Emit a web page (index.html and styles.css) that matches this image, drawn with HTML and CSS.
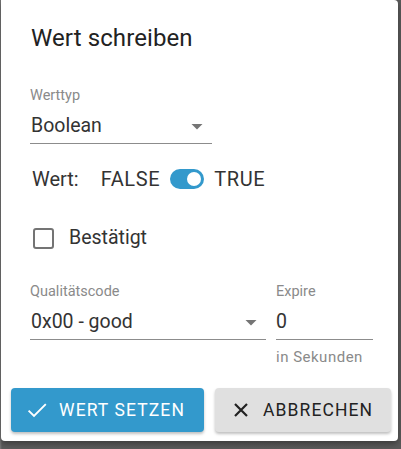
FILE: index.html
```html
<!DOCTYPE html>
<html lang="de">
<head>
<meta charset="utf-8">
<title>Wert schreiben</title>
<link rel="stylesheet" href="styles.css">
</head>
<body>
<div class="dialog">
  <h2 class="title">Wert schreiben</h2>
  <div class="content">
    <div class="field field-type">
      <div class="label">Werttyp</div>
      <div class="select">
        <span class="value">Boolean</span>
        <svg class="arrow" width="24" height="24" viewBox="0 0 24 24"><path d="M6.5 10l5.5 5.5 5.5-5.5z" fill="#757575"/></svg>
      </div>
    </div>
    <div class="switch-row">
      <span class="wert">Wert:</span>
      <span class="opt">FALSE</span>
      <span class="switch"><span class="thumb"></span></span>
      <span class="opt">TRUE</span>
    </div>
    <div class="check-row">
      <span class="checkbox"></span>
      <span>Bestätigt</span>
    </div>
    <div class="pair">
      <div class="field field-quality">
        <div class="label">Qualitätscode</div>
        <div class="select">
          <span class="value">0x00 - good</span>
          <svg class="arrow" width="24" height="24" viewBox="0 0 24 24"><path d="M6.5 10l5.5 5.5 5.5-5.5z" fill="#757575"/></svg>
        </div>
      </div>
      <div class="field field-expire">
        <div class="label">Expire</div>
        <div class="select">
          <span class="value">0</span>
        </div>
        <div class="helper">in Sekunden</div>
      </div>
    </div>
  </div>
  <div class="actions">
    <button class="btn btn-primary">
      <svg width="24" height="24" viewBox="0 0 24 24"><path d="M3.6 12.6l5.4 5.4 11.8-11.8" fill="none" stroke="#fff" stroke-width="1.9"/></svg>
      <span>WERT SETZEN</span>
    </button>
    <button class="btn btn-secondary">
      <svg width="24" height="24" viewBox="0 0 24 24"><path d="M6 6l12 12M18 6L6 18" fill="none" stroke="#222" stroke-width="2.2"/></svg>
      <span>ABBRECHEN</span>
    </button>
  </div>
</div>
</body>
</html>
```

FILE: styles.css
```css
html, body {
  margin: 0;
  padding: 0;
}
body {
  background: linear-gradient(90deg, #7a7a7a 0, #5c5c5c 2px, #5a5a5a);
  width: 401px;
  height: 449px;
  overflow: hidden;
  font-family: Roboto, "Noto Sans", sans-serif;
  color: #333;
}
.dialog {
  margin-left: 1px;
  width: 397px;
  height: 441px;
  background: #fff;
  border-radius: 0 4px 4px 4px;
  box-shadow: 0 3px 6px rgba(0,0,0,0.35);
  display: flex;
  flex-direction: column;
  box-sizing: border-box;
}
.title {
  margin: 24px 0 0 30px;
  font-size: 24px;
  line-height: 28px;
  font-weight: 400;
  color: #222;
  letter-spacing: 0.1px;
}
.content {
  padding: 0 0 0 29px;
  display: flex;
  flex-direction: column;
}
.label {
  font-size: 14.5px;
  line-height: 16px;
  color: #8a8a8a;
}
.field-type {
  width: 182px;
  margin-top: 36px;
}
.select {
  display: flex;
  align-items: center;
  justify-content: space-between;
  border-bottom: 1px solid #8c8c8c;
  margin-top: 10px;
  height: 28px;
  padding-bottom: 1px;
  box-sizing: content-box;
}
.value {
  font-size: 19.5px;
  line-height: 24px;
  padding-left: 1px;
  align-self: flex-start;
}
.arrow {
  margin-right: 3px;
  align-self: flex-start;
}
.switch-row {
  margin-top: 23px;
  display: flex;
  align-items: center;
  font-size: 20px;
  line-height: 24px;
  padding-left: 2px;
}
.wert {
  margin-right: 22px;
}
.opt {
  letter-spacing: 0.6px;
}
.switch {
  width: 34px;
  height: 20px;
  border-radius: 10px;
  background: #3399cc;
  margin: 0 10px 0 10px;
  display: flex;
  align-items: center;
  justify-content: flex-end;
  padding-right: 3px;
  box-sizing: border-box;
}
.thumb {
  width: 14px;
  height: 14px;
  border-radius: 50%;
  background: #fff;
}
.check-row {
  margin-top: 35px;
  display: flex;
  align-items: center;
  font-size: 19.5px;
  line-height: 24px;
  padding-left: 3px;
}
.checkbox {
  width: 17px;
  height: 17px;
  border: 2.5px solid #747474;
  border-radius: 3px;
  margin-right: 15px;
}
.pair {
  display: flex;
  gap: 10px;
  margin-top: 34px;
}
.field-quality {
  width: 236px;
}
.field-expire {
  width: 97px;
}
.field-expire .value {
  padding-left: 0;
}
.helper {
  margin-top: 9px;
  font-size: 15px;
  line-height: 16px;
  letter-spacing: 0.5px;
  color: #8a8a8a;
}
.actions {
  margin-top: auto;
  padding: 0 0 9px 10px;
  display: flex;
  gap: 11px;
}
.btn {
  height: 44px;
  border: none;
  border-radius: 4px;
  display: flex;
  align-items: center;
  font-family: Roboto, "Noto Sans", sans-serif;
  font-size: 17.5px;
  letter-spacing: 1.1px;
  padding: 0;
  box-shadow: 0 2px 3px rgba(0,0,0,0.25);
}
.btn-primary {
  width: 193px;
  background: #3399cc;
  color: #fff;
  padding-left: 14px;
}
.btn-primary span {
  margin-left: 10px;
}
.btn-secondary {
  width: 176px;
  background: #e0e0e0;
  color: #222;
  padding-left: 14px;
}
.btn-secondary span {
  margin-left: 10px;
}
```
